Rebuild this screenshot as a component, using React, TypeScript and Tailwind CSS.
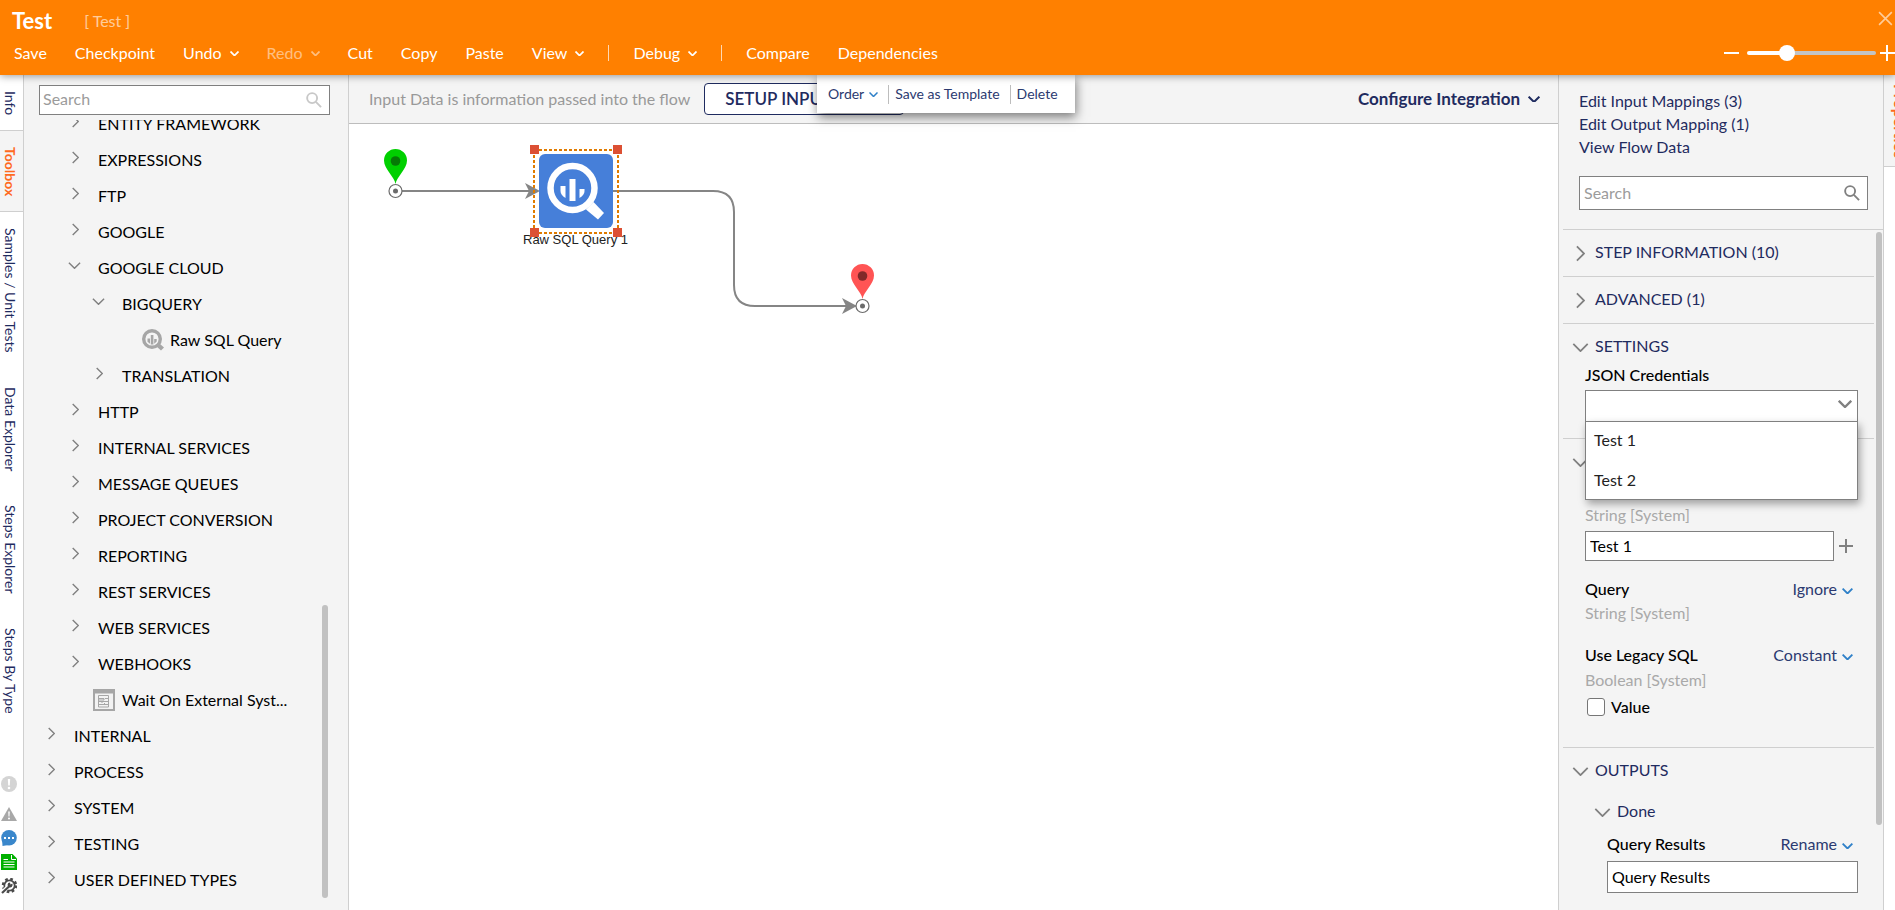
import React from 'react';
import { clsx } from 'clsx';

// --- DATA ---
type TreeRow = { label: string; level: number; open?: boolean; icon?: 'query' | 'form' };

const tree: TreeRow[] = [
    { label: 'ENTITY FRAMEWORK', level: 2 },
    { label: 'EXPRESSIONS', level: 2 },
    { label: 'FTP', level: 2 },
    { label: 'GOOGLE', level: 2 },
    { label: 'GOOGLE CLOUD', level: 2, open: true },
    { label: 'BIGQUERY', level: 3, open: true },
    { label: 'Raw SQL Query', level: 4, icon: 'query' },
    { label: 'TRANSLATION', level: 3 },
    { label: 'HTTP', level: 2 },
    { label: 'INTERNAL SERVICES', level: 2 },
    { label: 'MESSAGE QUEUES', level: 2 },
    { label: 'PROJECT CONVERSION', level: 2 },
    { label: 'REPORTING', level: 2 },
    { label: 'REST SERVICES', level: 2 },
    { label: 'WEB SERVICES', level: 2 },
    { label: 'WEBHOOKS', level: 2 },
    { label: 'Wait On External Syst...', level: 3, icon: 'form' },
    { label: 'INTERNAL', level: 1 },
    { label: 'PROCESS', level: 1 },
    { label: 'SYSTEM', level: 1 },
    { label: 'TESTING', level: 1 },
    { label: 'USER DEFINED TYPES', level: 1 },
];

const indent: Record<number, string> = { 1: 'pl-5', 2: 'pl-11', 3: 'pl-17', 4: 'pl-23' };

const railTabs = ['Info', 'Toolbox', 'Samples / Unit Tests', 'Data Explorer', 'Steps Explorer', 'Steps By Type'];

// --- ICONS ---
const Chevron = ({ className, width = 2 }: { className?: string; width?: number }) => (
    <svg viewBox="0 0 18 10" className={className} fill="none" stroke="currentColor" strokeWidth={width}>
        <path d="M1 1l8 8 8-8" />
    </svg>
);

const ChevronRight = ({ className, width = 2 }: { className?: string; width?: number }) => (
    <svg viewBox="0 0 10 18" className={className} fill="none" stroke="currentColor" strokeWidth={width}>
        <path d="M1 1l8 8-8 8" />
    </svg>
);

const SearchIcon = ({ className }: { className?: string }) => (
    <svg viewBox="0 0 17 17" className={className} fill="none" stroke="currentColor" strokeWidth="2">
        <circle cx="6.5" cy="6.5" r="5.3" />
        <path d="M10.5 10.5l5.5 5.5" />
    </svg>
);

const QueryIcon = ({ className }: { className?: string }) => (
    <svg viewBox="0 0 60 60" className={className}>
        <circle cx="26.500" cy="27" r="22" fill="none" stroke="currentColor" strokeWidth="6.5" />
        <path d="M40 48.500l7.500-7.500L58 52l-6 6.500z" fill="currentColor" />
        <path d="M14.500 25h5v12q-5-3-5-7z" fill="currentColor" />
        <path d="M23.500 18h6v22h-6z" fill="currentColor" />
        <path d="M33.500 28h5v2q0 4-5 7z" fill="currentColor" />
    </svg>
);

const QueryIconSmall = ({ className }: { className?: string }) => (
    <svg viewBox="0 0 22 22" className={className}>
        <circle cx="10" cy="10" r="8.300" fill="none" stroke="currentColor" strokeWidth="3.400" />
        <path d="M14.500 17.500l3-3 4.500 4-3 3z" fill="currentColor" />
        <path d="M5.500 9.500H8v5.200l-2.500-2zM8.800 6h2.600v9.500H8.800zM12.200 10h2.500v2.500l-2.500 2.200z" fill="currentColor" />
    </svg>
);

const FormIcon = ({ className }: { className?: string }) => (
    <svg viewBox="0 0 22 22" className={className} fill="none" stroke="#a6a6a6">
        <path d="M1 1h20v20H1z" strokeWidth="2" fill="#f2f2f2" />
        <path d="M0 0h22v4.500H0z" fill="#a6a6a6" stroke="none" />
        <path d="M5.500 6.500h10v11.500h-10zM6 9.500h5v1.500H6M15 9.500h-3M15 12.500H9v1.500M6 12.500h3M6 15.500h9M11.500 14v2" />
    </svg>
);

const Pin = ({ x, y, fill, dot }: { x: number; y: number; fill: string; dot: string }) => (
    <g transform={`translate(${x} ${y})`}>
        <path d="M0-7C-1-14-11.500-22-11.500-30.500a11.500 11.500 0 0 1 23 0C11.500-22 1-14 0-7z" fill={fill} />
        <circle cy="-30" r="4.800" fill={dot} />
        <circle r="6.500" fill="#fff" stroke="#6b6b6b" strokeWidth="1.200" />
        <circle r="2.500" fill="#6b6b6b" />
    </g>
);

// --- PIECES ---
const MenuItem = ({ label, arrow, dim }: { label: string; arrow?: boolean; dim?: boolean }) => (
    <button className={clsx('flex items-center gap-2', dim && 'opacity-50')}>
        {label}
        {arrow && <Chevron className="mt-px w-[9px]" width={3.5} />}
    </button>
);

const SectionHead = ({ label, open }: { label: string; open?: boolean }) => (
    <button className="flex h-[46px] w-full items-center text-left text-[#1f2b5f]">
        <span className="flex w-8 justify-start pl-[9px]">
            {open ? <Chevron className="h-[9px] w-[17px] text-[#808080]" /> : <ChevronRight className="ml-1 h-[17px] w-[9px] text-[#808080]" />}
        </span>
        <span className="pb-[2px]">{label}</span>
    </button>
);

const FieldHead = ({ id, label, action }: { id: string; label: string; action: string }) => (
    <div className="flex items-center justify-between">
        <label htmlFor={id} className="font-medium text-black">{label}</label>
        <button className="flex items-center gap-[5px] pr-[5px] text-[#2b3a70]">
            {action}
            <Chevron className="mt-1 w-[11px] text-[#2f80c8]" width={3} />
        </button>
    </div>
);

export default function App() {
    return (
        <div className="flex h-screen flex-col overflow-hidden bg-white font-[Lato,'Open_Sans',sans-serif] text-base leading-5 text-black">
            {/* HEADER */}
            <header className="relative z-20 flex h-[75px] shrink-0 flex-col bg-[#ff8000] text-white shadow-[0_1px_8px_rgba(0,0,0,0.4)]">
                <div className="flex h-[41px] items-center pl-3">
                    <h1 className="text-[22px] font-bold">Test</h1>
                    <span className="ml-8 opacity-60">[ Test ]</span>
                    <button aria-label="Close" className="mb-1 ml-auto opacity-60">
                        <svg viewBox="0 0 16 16" className="size-[17px]" fill="none" stroke="currentColor" strokeWidth="1.5">
                            <path d="M1 2l12 12M13 2L1 14" />
                        </svg>
                    </button>
                </div>
                <div className="flex h-6 items-center">
                    <nav className="flex items-center gap-7 pl-[14px]">
                        <MenuItem label="Save" />
                        <MenuItem label="Checkpoint" />
                        <MenuItem label="Undo" arrow />
                        <MenuItem label="Redo" arrow dim />
                        <MenuItem label="Cut" />
                        <MenuItem label="Copy" />
                        <MenuItem label="Paste" />
                        <MenuItem label="View" arrow />
                    </nav>
                    <nav className="ml-6 flex items-center gap-6">
                        <span className="h-4 w-px bg-white/70" />
                        <MenuItem label="Debug" arrow />
                        <span className="h-4 w-px bg-white/70" />
                        <MenuItem label="Compare" />
                    </nav>
                    <nav className="ml-7"><MenuItem label="Dependencies" /></nav>
                    <div className="ml-auto flex shrink-0 items-center">
                        <button aria-label="Zoom out" className="h-[2px] w-[15px] bg-white" />
                        <input
                            type="range"
                            aria-label="Zoom"
                            defaultValue={28}
                            className="mr-1 ml-2 h-1 w-[129px] appearance-none rounded-full bg-linear-to-r from-white from-30% to-[#c4c4c4] to-30% [&::-webkit-slider-thumb]:size-4 [&::-webkit-slider-thumb]:appearance-none [&::-webkit-slider-thumb]:rounded-full [&::-webkit-slider-thumb]:bg-white"
                        />
                        <button aria-label="Zoom in">
                            <svg viewBox="0 0 15 16" className="h-4 w-[15px]" stroke="currentColor" strokeWidth="2">
                                <path d="M0 8h15M7 0v16" />
                            </svg>
                        </button>
                    </div>
                </div>
            </header>

            <div className="flex min-h-0 flex-1">
                {/* LEFT RAIL */}
                <aside className="flex w-6 shrink-0 flex-col border-r border-[#cfcfcf] bg-white text-sm text-[#1f2b5f]">
                    {railTabs.map((tab, i) => (
                        <button
                            key={tab}
                            className={clsx(
                                'w-full pt-4 pr-1 leading-[18px] [writing-mode:vertical-rl]',
                                i < 2 ? 'pb-[15px]' : 'pb-[18px]',
                                tab === 'Toolbox' && 'border-t border-b border-[#cfcfcf] bg-[#f4f4f4] font-bold text-[#ff6a1f]'
                            )}
                        >
                            {tab}
                        </button>
                    ))}
                    <div className="mt-auto mb-4 flex flex-col gap-2 pl-px">
                        <svg viewBox="0 0 16 16" className="mb-[6px] size-4">
                            <circle cx="8" cy="8" r="8" fill="#d4d4d4" />
                            <path d="M6.800 3h2.400l-.4 6.500H7.200z" fill="#fff" />
                            <circle cx="8" cy="12" r="1.300" fill="#fff" />
                        </svg>
                        <svg viewBox="0 0 16 16" className="size-4">
                            <path d="M8 1l8 14H0z" fill="#a8a8a8" />
                            <path d="M7.200 5.500h1.600l-.3 5h-1z" fill="#fff" />
                            <circle cx="8" cy="12.500" r="1" fill="#fff" />
                        </svg>
                        <svg viewBox="0 0 16 16" className="size-4" fill="#3a87cb">
                            <circle cx="8" cy="7.800" r="7.800" />
                            <path d="M1 9l.5 7 6-1z" />
                            <path d="M3 7h2v2H3zM7 7h2v2H7zM11 7h2v2h-2z" fill="#fff" />
                        </svg>
                        <svg viewBox="0 0 16 16" className="size-4">
                            <path d="M0 0h11.500L16 4.500V16H0z" fill="#00b000" />
                            <path d="M10.500 1v4.500H15M2.500 5.500H7M2.500 8h11M2.500 10.500h11M2.500 13h11" fill="none" stroke="#fff" />
                        </svg>
                        <svg viewBox="0 0 16 16" className="size-4" fill="none" stroke="#4a4a4a">
                            <circle cx="8.500" cy="7.500" r="6.500" strokeWidth="2.500" strokeDasharray="2.600 2.500" />
                            <circle cx="8.500" cy="7.500" r="5.200" strokeWidth="1.800" />
                            <path d="M0 15.500L8 8" stroke="#fff" strokeWidth="4" />
                            <path d="M1 15l7-6.500" strokeWidth="2.200" />
                            <path d="M11.500 5.500l-2 1-.5-2a2.500 2.500 0 1 0 2.500 3z" fill="#4a4a4a" stroke="none" />
                        </svg>
                    </div>
                </aside>

                {/* TOOLBOX */}
                <section className="relative flex w-[325px] shrink-0 flex-col border-r border-[#cfcfcf] bg-[#f4f4f4]">
                    <div className="relative mt-[10px] mr-[18px] ml-[15px] shrink-0">
                        <input
                            type="text"
                            aria-label="Search toolbox"
                            placeholder="Search"
                            className="block h-[30px] w-full border border-[#808080] bg-white px-[3px] pb-1 outline-none placeholder:text-[#9b9b9b]"
                        />
                        <SearchIcon className="absolute top-[7px] right-2 size-4 text-[#c8c8c8]" />
                    </div>
                    <div className="mt-[5px] flex min-h-0 flex-1 flex-col overflow-hidden">
                        <ul className="-mt-[14px]">
                            {tree.map((row) => (
                                <li key={row.label}>
                                    <button className={clsx('flex h-9 items-center text-left whitespace-nowrap', indent[row.level])}>
                                        {row.icon === 'query' && <span className="mr-[6px] ml-[26px]"><QueryIconSmall className="size-[22px] text-[#a6a6a6]" /></span>}
                                        {row.icon === 'form' && <span className="mr-[7px] ml-px"><FormIcon className="size-[22px]" /></span>}
                                        {!row.icon && (
                                            <span className="flex w-[30px] pb-[6px]">
                                                {row.open ? <Chevron className="h-[7px] w-[13px] text-[#808080]" /> : <ChevronRight className="ml-1 h-[13px] w-[7px] text-[#808080]" />}
                                            </span>
                                        )}
                                        {row.label}
                                    </button>
                                </li>
                            ))}
                        </ul>
                    </div>
                    <div className="absolute right-5 bottom-3 h-[293px] w-[6px] rounded-full bg-[#c1c1c1]" />
                </section>

                {/* FLOW DESIGNER */}
                <main className="flex min-w-0 flex-1 flex-col">
                    <div className="relative flex h-[49px] shrink-0 items-center border-b border-[#bdbdbd] bg-[#f4f4f4] pr-[18px] pl-5">
                        <span className="pb-px text-[#999]">Input Data is information passed into the flow</span>
                        <button className="ml-[14px] h-8 w-[200px] rounded border border-[#1f2b5f] bg-white pl-5 text-left text-[17px] font-semibold text-[#1f2b5f]">SETUP INPUT DATA</button>
                        <button className="ml-auto flex items-center gap-2 text-[17px] font-bold text-[#1f2b5f]">
                            Configure Integration
                            <Chevron className="w-3" width={3} />
                        </button>
                        <div className="absolute top-0 left-[468px] z-10 flex h-[38px] items-center bg-white px-[11px] text-sm text-[#2b3a70] shadow-[1px_4px_10px_rgba(0,0,0,0.5)]">
                            <button className="flex items-center gap-[5px]">Order <Chevron className="w-[9px] text-[#2f80c8]" width={3} /></button>
                            <span className="mr-[6px] ml-[10px] h-[19px] w-px bg-[#bdbdbd]" />
                            <button>Save as Template</button>
                            <span className="mr-[6px] ml-[10px] h-[19px] w-px bg-[#bdbdbd]" />
                            <button className="pr-[6px]">Delete</button>
                        </div>
                    </div>

                    <div className="relative min-h-0 flex-1 overflow-hidden">
                        <svg width="600" height="260" viewBox="349 124 600 260" className="absolute top-0 left-0">
                            <g fill="none" stroke="#858585" strokeWidth="2">
                                <path d="M402 191H530" />
                                <path d="M613 191H713Q734 191 734 212V285Q734 306 755 306H848" />
                            </g>
                            <path d="M525 183l15 8-15 8 4-8zM842 298l15 8-15 8 4-8z" fill="#858585" />
                            <Pin x={395.5} y={191} fill="#00d000" dot="#067a06" />
                            <Pin x={862.5} y={306} fill="#ff5454" dot="#802929" />
                        </svg>
                        <div className="absolute top-[30px] left-[190px] flex size-[74px] items-center justify-center rounded-md bg-[#467fd9]">
                            <QueryIcon className="size-[60px] text-white" />
                        </div>
                        <span className="absolute top-[108px] left-[174px] font-['Liberation_Sans',sans-serif] text-[13px] leading-4 whitespace-nowrap text-[#222]">Raw SQL Query 1</span>
                        <svg width="92" height="92" viewBox="0 0 92 92" className="absolute top-[21px] left-[181px]">
                            <path d="M4 5h84M4 88h84M4 5v83M88 5v83" fill="none" stroke="#e07b00" strokeWidth="2" strokeDasharray="3 2" />
                            <path d="M0 0h9v9H0zM83 0h9v9h-9zM0 83h9v9H0zM83 83h9v9h-9z" fill="#dc5034" />
                        </svg>
                    </div>
                </main>

                {/* PROPERTIES */}
                <section className="relative flex w-[325px] shrink-0 flex-col border-l border-[#cfcfcf] bg-[#f4f4f4]">
                    <div className="flex flex-col items-start pt-[14px] pl-5 leading-[23px] text-[#1f2b5f]">
                        <a href="#input-mappings">Edit Input Mappings (3)</a>
                        <a href="#output-mapping">Edit Output Mapping (1)</a>
                        <a href="#flow-data">View Flow Data</a>
                    </div>
                    <div className="relative mt-[18px] mr-[15px] mb-[19px] ml-5">
                        <input
                            type="text"
                            aria-label="Search properties"
                            placeholder="Search"
                            className="block h-[34px] w-full border border-[#808080] bg-white px-1 pb-[2px] outline-none placeholder:text-[#9b9b9b]"
                        />
                        <SearchIcon className="absolute top-[9px] right-2 size-4 text-[#808080]" />
                    </div>
                    <div className="ml-1 min-h-0 flex-1 overflow-hidden border-t border-[#cfcfcf] pr-[9px]">
                        <div className="border-b border-[#cfcfcf]"><SectionHead label="STEP INFORMATION (10)" /></div>
                        <div className="border-b border-[#cfcfcf]"><SectionHead label="ADVANCED (1)" /></div>
                        <div className="h-[115px] border-b border-[#cfcfcf]">
                            <SectionHead label="SETTINGS" open />
                            <div className="relative -mt-[5px] mr-4 ml-[22px]">
                                <label htmlFor="credentials" className="block font-medium">JSON Credentials</label>
                                <select id="credentials" className="mt-[5px] block h-8 w-full appearance-none border border-[#808080] bg-white px-2">
                                    <option value="" />
                                </select>
                                <Chevron className="absolute top-[35px] right-[6px] w-[14px] text-[#808080]" width={3} />
                                <ul className="absolute top-14 right-0 left-0 z-10 border border-[#808080] bg-white text-[#222] shadow-[2px_4px_8px_rgba(0,0,0,0.35)]">
                                    <li className="flex h-[38px] items-center pb-[2px] pl-2">Test 1</li>
                                    <li className="flex h-[39px] items-center pl-2">Test 2</li>
                                </ul>
                            </div>
                        </div>
                        <div className="h-[309px] border-b border-[#cfcfcf]">
                            <SectionHead label="INPUTS" open />
                            <div className="mr-4 ml-[22px] pt-5">
                                <div className="text-[#a9a9a9]">String [System]</div>
                                <div className="mt-[6px] flex items-center gap-[5px]">
                                    <input type="text" aria-label="Project id" defaultValue="Test 1" className="h-[30px] min-w-0 flex-1 border border-[#808080] bg-white px-1 pb-[2px] outline-none" />
                                    <button aria-label="Add" className="pr-[5px]">
                                        <svg viewBox="0 0 14 14" className="size-[14px]" stroke="#808080" strokeWidth="2"><path d="M0 7h14M7 0v14" /></svg>
                                    </button>
                                </div>
                                <div className="mt-[18px]"><FieldHead id="query" label="Query" action="Ignore" /></div>
                                <output id="query" className="mt-1 block text-[#a9a9a9]">String [System]</output>
                                <div className="mt-[22px]"><FieldHead id="legacy" label="Use Legacy SQL" action="Constant" /></div>
                                <div className="mt-[5px] text-[#a9a9a9]">Boolean [System]</div>
                                <label className="mt-[7px] flex items-center gap-[6px] pl-[2px] font-medium">
                                    <input id="legacy" type="checkbox" className="size-[18px] appearance-none rounded-[3px] border border-[#767676] bg-white" />
                                    Value
                                </label>
                            </div>
                        </div>
                        <SectionHead label="OUTPUTS" open />
                        <div className="-mt-[5px] pl-[22px]"><SectionHead label="Done" open /></div>
                        <div className="-mt-px mr-4 ml-11">
                            <FieldHead id="results" label="Query Results" action="Rename" />
                            <input id="results" type="text" defaultValue="Query Results" className="mt-[7px] block h-8 w-full border border-[#808080] bg-white px-1 pb-[2px] outline-none" />
                        </div>
                    </div>
                    <div className="absolute top-[157px] right-[1px] h-[593px] w-[6px] rounded-full bg-[#c1c1c1]" />
                </section>

                {/* RIGHT RAIL */}
                <aside className="w-3 shrink-0 overflow-hidden border-l border-[#cfcfcf] bg-white">
                    <button className="border-b border-[#cfcfcf] bg-[#f4f4f4] pt-[9px] pb-2 pl-[6px] text-base leading-5 font-bold text-[#ff6a1f] [writing-mode:vertical-rl]">Properties</button>
                </aside>
            </div>
        </div>
    );
}
